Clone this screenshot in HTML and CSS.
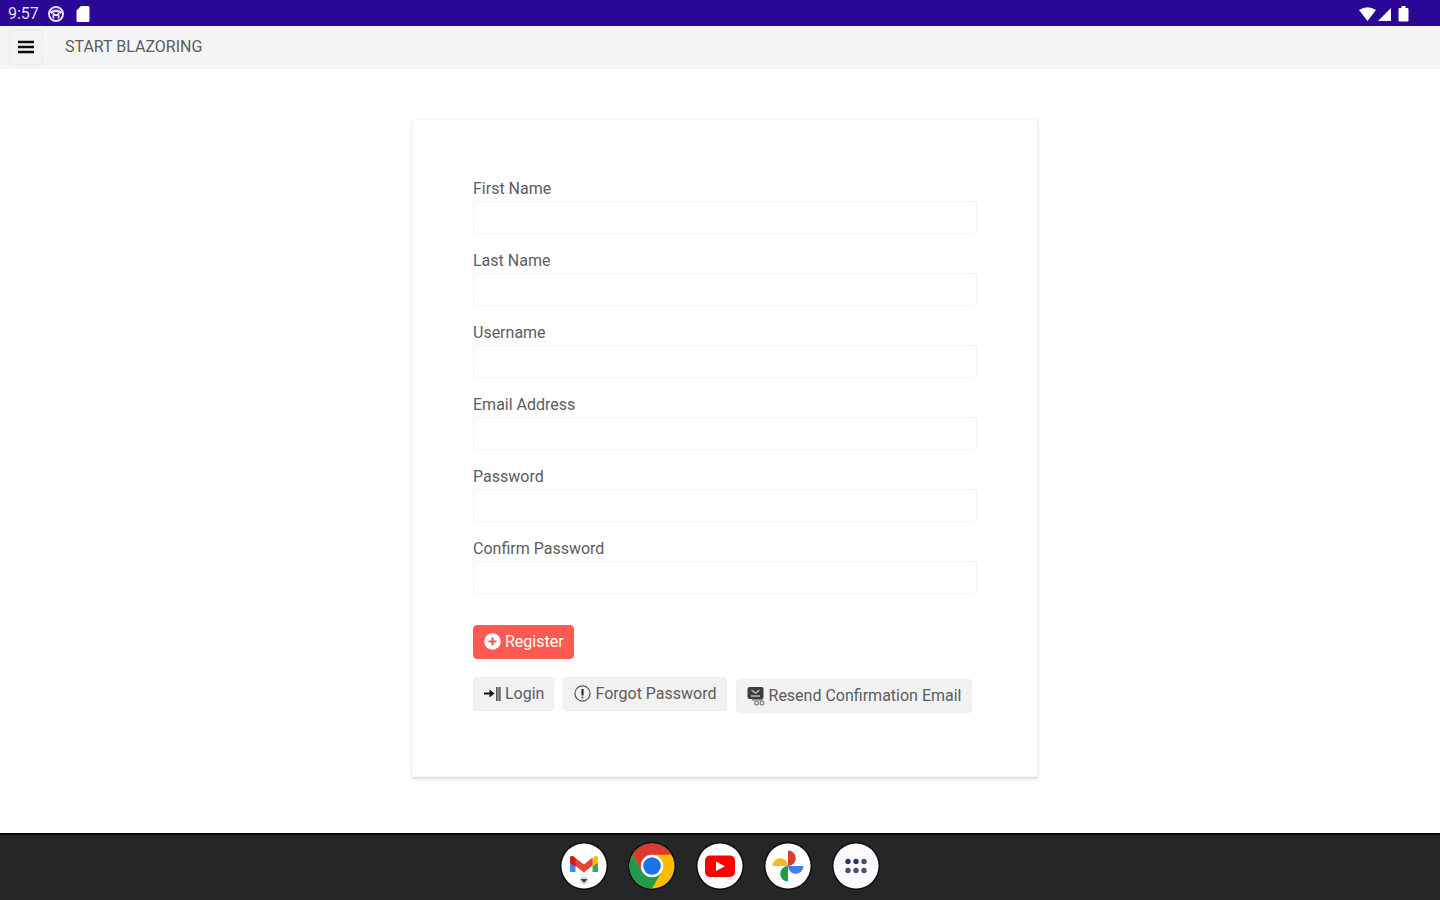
FILE: index.html
```html
<!DOCTYPE html>
<html lang="en">
<head>
<meta charset="utf-8">
<meta name="viewport" content="width=device-width, initial-scale=1">
<title>Start Blazoring</title>
<link rel="stylesheet" href="styles.css">
</head>
<body>
<div class="status-bar">
  <div class="status-group">
    <span class="clock">9:57</span>
    <svg class="status-face" width="18" height="18" viewBox="0 0 18 18" aria-hidden="true">
      <circle cx="9" cy="9" r="7" fill="none" stroke="#e4dcf8" stroke-width="2"/>
      <path d="M3.500 8Q9 3.500 14.500 8" fill="none" stroke="#e4dcf8" stroke-width="2.400"/>
      <path d="M6.500 8v5.500M11.500 8v5.500M6.500 10h5" fill="none" stroke="#e4dcf8" stroke-width="1.800"/>
    </svg>
    <svg width="14" height="18" viewBox="0 0 14 18" aria-hidden="true">
      <path d="M5 1h7q1.500 0 1.500 1.500v13q0 1.500-1.500 1.500H2q-1.500 0-1.500-1.500V5.500z" fill="#fff"/>
    </svg>
  </div>
  <svg width="54" height="18" viewBox="0 0 54 18" aria-hidden="true">
    <path d="M1 5Q9.500-.5 18 5L9.500 16z" fill="#fff"/>
    <path d="M33 3v13H20z" fill="#fff"/>
    <path d="M40.500 4q0-1 1-1h2V1h4v2h2q1 0 1 1v11.500q0 1-1 1h-8q-1 0-1-1z" fill="#fff"/>
  </svg>
</div>

<header class="app-bar">
  <button class="menu-button" type="button" aria-label="Menu">
    <svg width="16" height="16" viewBox="0 0 16 16" aria-hidden="true">
      <path d="M0 3h16M0 8h16M0 13h16" stroke="#0c0c0c" stroke-width="2.600"/>
    </svg>
  </button>
  <span class="app-title">START BLAZORING</span>
</header>

<main class="content">
  <form class="card">
    <div class="fields">
      <div class="field"><label for="first">First Name</label><input id="first" type="text"></div>
      <div class="field"><label for="last">Last Name</label><input id="last" type="text"></div>
      <div class="field"><label for="user">Username</label><input id="user" type="text"></div>
      <div class="field"><label for="email">Email Address</label><input id="email" type="email"></div>
      <div class="field"><label for="pass">Password</label><input id="pass" type="password"></div>
      <div class="field"><label for="confirm">Confirm Password</label><input id="confirm" type="password"></div>
    </div>
    <button class="button primary" type="button">
      <svg width="17" height="17" viewBox="0 0 17 17" aria-hidden="true">
        <circle cx="8.500" cy="8.500" r="8.300" fill="#fff"/>
        <path d="M4.500 8.500h8M8.500 4.500v8" stroke="#ff5a52" stroke-width="2.200"/>
      </svg>
      Register
    </button>
    <div class="actions">
      <button class="button" type="button">
        <svg width="17" height="17" viewBox="0 0 17 17" aria-hidden="true">
          <path d="M0 8.500h7" stroke="#111" stroke-width="2"/>
          <path d="M5.500 4.500l5 4-5 4z" fill="#111"/>
          <path d="M12 2h4.500v14H12z" fill="#8a8a8a"/>
          <path d="M12.500 2v14M16 2v14" stroke="#555"/>
        </svg>
        Login
      </button>
      <button class="button" type="button">
        <svg width="17" height="17" viewBox="0 0 17 17" aria-hidden="true">
          <circle cx="8.500" cy="8.500" r="7.600" fill="none" stroke="#555" stroke-width="1.200"/>
          <path d="M8.500 4v6.500" stroke="#333" stroke-width="2.200"/>
          <path d="M8.500 11.500v2" stroke="#555" stroke-width="1.600"/>
        </svg>
        Forgot Password
      </button>
      <button class="button lowered" type="button">
        <svg width="18" height="20" viewBox="0 0 18 20" aria-hidden="true">
          <rect x=".5" y="1" width="16" height="12" rx="2" fill="#3d3d3d"/>
          <path d="M4.500 4l4 3 4-3M4 10h9" fill="none" stroke="#bbb" stroke-width="1.400"/>
          <path d="M5 13.800h11" stroke="#888" stroke-width="1.600"/>
          <circle cx="9.500" cy="17" r="1.900" fill="none" stroke="#888" stroke-width="1.300"/>
          <circle cx="15" cy="17" r="1.900" fill="none" stroke="#888" stroke-width="1.300"/>
        </svg>
        Resend Confirmation Email
      </button>
    </div>
  </form>
</main>

<nav class="dock" aria-label="Apps">
  <button class="app" type="button" aria-label="Gmail">
    <svg viewBox="0 0 46 46" aria-hidden="true">
      <circle cx="23" cy="23" r="22.500" fill="#fff"/>
      <path d="M9 16v13h5.500V18z" fill="#4285f4"/>
      <path d="M37 16v13h-5.500V18z" fill="#34a853"/>
      <path d="M31.500 16l2-2.500q3.500-1.500 3.500 2.500v4l-5.500 3z" fill="#fbbc04"/>
      <path d="M9 20v-4q0-4 3.500-2.500L23 21.500l8.500-7v8L23 29.500 14.500 23z" fill="#ea4335"/>
      <path d="M9 16q0-4 3.500-2.500l2 2V24L9 20z" fill="#c5221f"/>
      <circle cx="23" cy="37.500" r="4" fill="#ddd"/>
      <path d="M19.500 36h7L23 40z" fill="#444"/>
    </svg>
  </button>
  <button class="app" type="button" aria-label="Chrome">
    <svg viewBox="0 0 46 46" aria-hidden="true">
      <circle cx="23" cy="23" r="22.500" fill="#fbbc05"/>
      <path d="M3.500 11.750A22.500 22.500 0 0 1 42.500 11.750H23L13 28.500z" fill="#db3a2f"/>
      <path d="M3.500 11.750A22.500 22.500 0 0 0 23 45.500L32.700 28.600 23 34 13.300 28.600z" fill="#23994a"/>
      <circle cx="23" cy="23" r="11.200" fill="#fff"/>
      <circle cx="23" cy="23" r="8.800" fill="#1a73e8"/>
    </svg>
  </button>
  <button class="app" type="button" aria-label="YouTube">
    <svg viewBox="0 0 46 46" aria-hidden="true">
      <circle cx="23" cy="23" r="22.500" fill="#fff"/>
      <rect x="8" y="12.500" width="30" height="21.500" rx="5" fill="#f00"/>
      <path d="M19 18.500v9.500l9-4.750z" fill="#fff"/>
    </svg>
  </button>
  <button class="app" type="button" aria-label="Photos">
    <svg viewBox="0 0 46 46" aria-hidden="true">
      <circle cx="23" cy="23" r="22.500" fill="#fff"/>
      <path d="M23 7.500a7.750 7.750 0 0 1 0 15.500z" fill="#db3a2f"/>
      <path d="M38.500 23a7.750 7.750 0 0 1-15.500 0z" fill="#3b82f0"/>
      <path d="M23 38.500a7.750 7.750 0 0 1 0-15.500z" fill="#1f9d4c"/>
      <path d="M7.500 23a7.750 7.750 0 0 1 15.500 0z" fill="#f5b921"/>
    </svg>
  </button>
  <button class="app" type="button" aria-label="All apps">
    <svg viewBox="0 0 46 46" aria-hidden="true">
      <circle cx="23" cy="23" r="22.500" fill="#fafaff"/>
      <g fill="#27376b">
        <circle cx="15" cy="18.500" r="2.700"/><circle cx="23" cy="18.500" r="2.700"/>
      </g>
      <circle cx="31" cy="18.500" r="2.700" fill="#5f4562"/>
      <g fill="#4c506c">
        <circle cx="15" cy="27.500" r="2.700"/><circle cx="23" cy="27.500" r="2.700"/><circle cx="31" cy="27.500" r="2.700"/>
      </g>
    </svg>
  </button>
</nav>
</body>
</html>
```
FILE: styles.css
```css
* {
  box-sizing: border-box;
}

body {
  margin: 0;
  min-height: 100vh;
  display: flex;
  flex-direction: column;
  background: #fff;
  color: #5c5c5c;
  font: 16px/24px Roboto, sans-serif;
}

svg {
  display: block;
  flex: none;
}

button {
  font: inherit;
  color: inherit;
  cursor: pointer;
}

.status-bar {
  display: flex;
  justify-content: space-between;
  align-items: center;
  height: 26px;
  padding: 1px 28px 0 8px;
  background: #2a0795;
}

.status-group {
  display: flex;
  align-items: center;
}

.clock {
  color: #e4dcf8;
}

.status-face {
  margin: 0 11px 0 8px;
}

.app-bar {
  display: flex;
  align-items: center;
  gap: 22px;
  height: 43px;
  padding: 0 9px 2px;
  background: #f5f5f5;
}

.menu-button {
  display: grid;
  place-items: center;
  width: 34px;
  height: 36px;
  padding: 0;
  border: 1px solid #ebebeb;
  border-radius: 4px;
  background: #f3f3f3;
}

.content {
  flex: 1;
  padding: 50px 0 48px 10px;
}

.card {
  max-width: 626px;
  margin: 0 auto;
  padding: 57px 60px 63px;
  border: 1px solid #f7f7f7;
  border-radius: 2px;
  box-shadow: 0 2px 3px rgba(0, 0, 0, 0.14);
}

.fields {
  display: grid;
  gap: 15px;
  margin-bottom: 31px;
}

.field {
  display: grid;
}

.field input {
  width: 100%;
  height: 33px;
  padding: 0 8px;
  border: 1px solid #f1f1f1;
  border-radius: 3px;
  background: #fff;
  font: inherit;
}

.actions {
  display: flex;
  align-items: flex-start;
  gap: 9px;
  margin-top: 18px;
}

.button {
  display: flex;
  align-items: center;
  gap: 4px;
  height: 34px;
  padding: 0 9px 1px 10px;
  border: 1px solid #ededed;
  border-radius: 4px;
  background: #f2f2f2;
  white-space: nowrap;
}

.primary {
  border-color: #ff5a52;
  background: #ff5a52;
  color: #fff;
}

.lowered {
  margin-top: 2px;
}

.dock {
  display: flex;
  justify-content: center;
  align-items: center;
  gap: 22px;
  height: 67px;
  padding-bottom: 3px;
  border-top: 2px solid #050505;
  background: #242628;
}

.app {
  width: 46px;
  height: 46px;
  padding: 0;
  border: 0;
  border-radius: 50%;
  background: none;
  box-shadow: 0 0 0 1px #0c0c0e;
}
```
